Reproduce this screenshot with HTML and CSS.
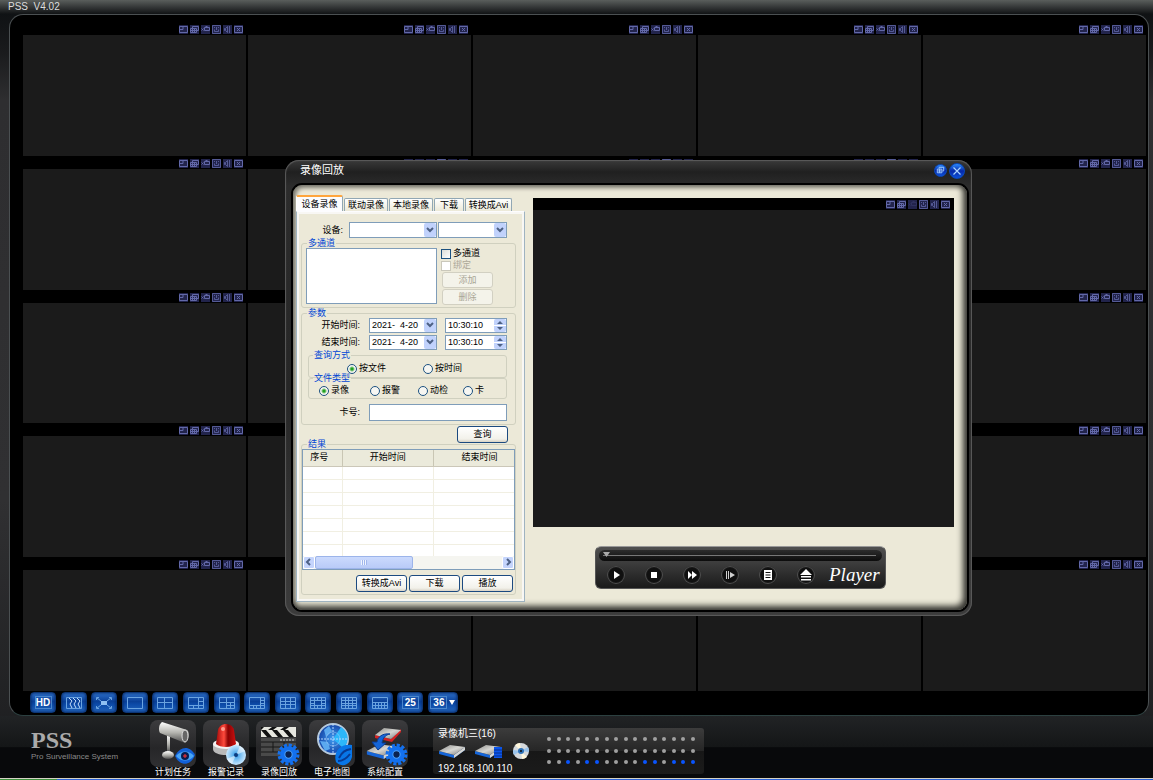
FILE: index.html
```html
<!DOCTYPE html>
<html lang="zh-CN">
<head>
  <meta charset="UTF-8" />
  <meta name="viewport" content="width=device-width, initial-scale=1.0"/>
  <title>PSS V4.02</title>
  <link rel="stylesheet" href="styles.css">
</head>
<body>

  <!-- shared symbols and gradients -->
  <svg class="defs" width="0" height="0" aria-hidden="true">
    <defs>
      <linearGradient id="metal" x1="0" y1="0" x2="0" y2="1">
        <stop offset="0" stop-color="#ffffff"/>
        <stop offset="0.5" stop-color="#b5b5b0"/>
        <stop offset="1" stop-color="#4b4b4b"/>
      </linearGradient>
      <linearGradient id="red" x1="0" y1="0" x2="1" y2="0">
        <stop offset="0" stop-color="#a00808"/>
        <stop offset="0.4" stop-color="#ff4a3c"/>
        <stop offset="0.6" stop-color="#8a0303"/>
        <stop offset="1" stop-color="#d01010"/>
      </linearGradient>
      <linearGradient id="plate" x1="0" y1="0" x2="1" y2="1">
        <stop offset="0" stop-color="#8b8b88"/>
        <stop offset="0.5" stop-color="#d6d6d2"/>
        <stop offset="1" stop-color="#777777"/>
      </linearGradient>
      <radialGradient id="disc">
        <stop offset="0" stop-color="#1b78c8"/>
        <stop offset="0.3" stop-color="#5fb2ee"/>
        <stop offset="1" stop-color="#c9e8ff"/>
      </radialGradient>
      <radialGradient id="radar">
        <stop offset="0" stop-color="#3f9bf0"/>
        <stop offset="1" stop-color="#1646a8"/>
      </radialGradient>
    </defs>
    <symbol id="i-view" viewBox="0 0 9 9"><path d="M.5 1.5h8v6h-8zM.5 4.500h3.500v-3"/></symbol>
    <symbol id="i-grid" viewBox="0 0 9 9"><path d="M.5 3.500h6v4h-6zM2.500 3.500v4M4.500 3.500v4M.5 5.500h6M2.500 3V1.500h6v4h-2"/></symbol>
    <symbol id="i-rec" viewBox="0 0 9 9"><path d="M3.500 2.500h5v3h-5zM.5 3.500l2 2M2.500 3.500l-2 2M4.500 1.500h2"/></symbol>
    <symbol id="i-snap" viewBox="0 0 9 9"><path d="M.5 .5h8v8h-8zM2.500 2v1M6.500 2v1M4.500 2v3M2.500 4.500v2h4v-2" opacity="0.8"/></symbol>
    <symbol id="i-sound" viewBox="0 0 9 9"><path d="M1.500 3.500v2h1v-2zM3 3l1.500-1.500v6L3 6M6.500 1v7" opacity="0.8"/></symbol>
    <symbol id="i-close" viewBox="0 0 9 9"><path d="M.5 1.500h8v6h-8zM3 3l3 3M6 3l-3 3"/></symbol>
    <symbol id="i-gear" viewBox="0 0 22 22">
      <circle cx="11" cy="11" r="9" fill="none" stroke="#1370ee" stroke-width="3" stroke-dasharray="3 1.700"/>
      <circle cx="11" cy="11" r="5.500" fill="none" stroke="#1370ee" stroke-width="5"/>
      <circle cx="11" cy="11" r="3.500" fill="#0a2250" stroke="#4aa2ff"/>
    </symbol>
    <symbol id="i-disk" viewBox="0 0 28 16">
      <path d="M1 8v3l15 4 11-8V4L16 12z" fill="#1565d8"/>
      <path d="M16 12l11-8v3l-11 8z" fill="#d6d6d2"/>
      <path d="M1 8l11-6 15 2-11 8z" fill="url(#plate)"/>
    </symbol>
  </svg>

  <header class="titlebar"><h1>PSS&nbsp; V4.02</h1></header>

  <main class="monitor">
    <div class="tiles" id="tiles"></div>

    <nav class="layouts" aria-label="画面分割">
      <button class="layout-btn"><span class="boxed">HD</span></button>
      <button class="layout-btn" aria-label="流畅"><svg viewBox="0 0 18 14"><path d="M1.500 1.500h15v11h-15z"/><path class="bright" d="M4 2l3 3-2 3 2 4M8 2l3 3-2 3 2 4M12 2l3 3-2 3 2 4"/></svg></button>
      <button class="layout-btn" aria-label="全屏"><svg viewBox="0 0 18 14"><path d="M1.500 4V1.500H4M14 1.500h2.500V4M16.500 10v2.500H14M4 12.500H1.500V10M2 2l4 3M16 2l-4 3M2 12l4-3M16 12l-4-3"/><path class="solid" d="M6 5h6v4H6z"/></svg></button>
      <button class="layout-btn" aria-label="1"><svg viewBox="0 0 18 14"><path d="M1.500 1.500h15v11h-15z"/></svg></button>
      <button class="layout-btn" aria-label="4"><svg viewBox="0 0 18 14"><path d="M1.500 1.500h15v11h-15zM8.500 2v10M2 6.500h14"/></svg></button>
      <button class="layout-btn" aria-label="6"><svg viewBox="0 0 18 14"><path d="M1.500 1.500h15v11h-15zM11.500 2v10M12 5.500h4M2 9.500h14M6.500 10v2"/></svg></button>
      <button class="layout-btn" aria-label="7"><svg viewBox="0 0 18 14"><path d="M1.500 1.500h15v11h-15zM8.500 2v10M2 6.500h14M12.500 7v5M9 9.500h7"/></svg></button>
      <button class="layout-btn" aria-label="8"><svg viewBox="0 0 18 14"><path d="M1.500 1.500h15v11h-15zM12.500 2v10M2 9.500h14M5.500 10v2M8.500 10v2M13 4.500h3M13 7.500h3"/></svg></button>
      <button class="layout-btn" aria-label="9"><svg viewBox="0 0 18 14"><path d="M1.500 1.500h15v11h-15zM6.500 2v10M11.500 2v10M2 5.500h14M2 8.500h14"/></svg></button>
      <button class="layout-btn" aria-label="13"><svg viewBox="0 0 18 14"><path d="M1.500 1.500h15v11h-15zM5.500 2v10M12.500 2v10M2 4.500h14M2 9.500h14M8.500 2v2M8.500 10v2M2 7.500h3M13 7.500h3"/></svg></button>
      <button class="layout-btn" aria-label="16"><svg viewBox="0 0 18 14"><path d="M1.500 1.500h15v11h-15zM5.500 2v10M8.500 2v10M12.500 2v10M2 4.500h14M2 7.500h14M2 9.500h14"/></svg></button>
      <button class="layout-btn" aria-label="20"><svg viewBox="0 0 18 14"><path d="M1.500 1.500h15v11h-15zM2 6.500h14M2 9.500h14M4.500 7v5M7.500 7v5M10.500 7v5M13.500 7v5"/></svg></button>
      <button class="layout-btn"><span class="boxed">25</span></button>
      <button class="layout-btn wide"><span class="boxed">36</span><i class="down"></i></button>
    </nav>
  </main>

  <footer class="dock">
    <div class="logo">
      <strong>PSS</strong>
      <small>Pro Surveillance System</small>
    </div>

    <nav class="apps">
      <a class="app" href="#">
        <svg viewBox="0 0 46 47">
          <path d="M17 15h3v18h-3z" fill="url(#metal)"/>
          <ellipse cx="18" cy="35" rx="6" ry="4" fill="url(#metal)"/>
          <path d="M12 2l25 8c3 2 2 11-2 13L10 13c-2-3-1-9 2-11z" fill="url(#metal)"/>
          <ellipse cx="35" cy="16" rx="3" ry="6" fill="#666" stroke="#ddd"/>
          <path d="M25 36c5-10 15-11 20-1-4 11-15 12-20 1z" fill="#1160d8"/>
          <path d="M26 36c5-6 13-6 18 0-5 6-13 6-18 0z" fill="#49a5f5"/>
          <circle cx="35" cy="36" r="4" fill="#0a1c50"/><path d="M33 36h4M35 34v4" stroke="#f33"/>
        </svg>
        <span>计划任务</span>
      </a>
      <a class="app" href="#">
        <svg viewBox="0 0 46 47">
          <path d="M10 24v5c0 8 26 8 26 0v-5z" fill="#b9b9b9"/>
          <ellipse cx="23" cy="24" rx="13" ry="5" fill="#f2f2f2"/>
          <path d="M13 24L15 10c2-8 14-8 16 0l2 14c-4 4-16 4-20 0z" fill="url(#red)"/>
          <circle cx="20" cy="9" r="2" fill="#ff9b8e"/>
          <circle cx="33" cy="35" r="10" fill="url(#disc)"/>
          <path d="M33 35l-9 4a10 10 0 0 0 5 5zM33 35l9-4a10 10 0 0 0-5-5z" fill="#fff" opacity="0.5"/>
          <circle cx="33" cy="35" r="2" fill="#0b3c80"/>
        </svg>
        <span>报警记录</span>
      </a>
      <a class="app" href="#">
        <svg viewBox="0 0 46 47">
          <path d="M5 18h35v18H5z" fill="#4a4a4a"/>
          <path d="M5 22h35M5 27h35M5 32h35M17 22v10M28 22v10" stroke="#161616"/>
          <path d="M5 7h35v10H5z" fill="#e6e6df"/>
          <path d="M5 10l6 7h5l-6-7zM16 10l6 7h5l-6-7zM27 10l6 7h5l-6-7zM5 7h3l-3 3zM12 10l4-3h5l-4 3zM24 10l4-3h5l-4 3z" fill="#111"/>
          <path d="M24 20h14" stroke="#ccc" stroke-dasharray="2 1"/>
          <use href="#i-gear" x="21" y="23" width="23" height="23"/>
        </svg>
        <span>录像回放</span>
      </a>
      <a class="app" href="#">
        <svg viewBox="0 0 46 47">
          <circle cx="24" cy="19" r="15" fill="url(#radar)" stroke="#b5c9dd" stroke-width="2"/>
          <path d="M24 19l8-12c9 6 8 16 2 21z" fill="#2cb7fa"/>
          <path d="M15 10l5-4 3 5-6 6zM11 21l8 1 2 7-5 2z" fill="#5ba9ef"/>
          <path d="M9 19h30M24 4v30" stroke="#b7d9ff" stroke-dasharray="2 1"/>
          <circle cx="24" cy="19" r="7" fill="none" stroke="#a6cdfa" opacity="0.5"/>
          <path d="M27 42c-3-10 4-19 16-17v12c-2 8-10 11-16 5z" fill="#0876e8"/>
          <path d="M30 38c3-6 6-8 12-9M29 41c5 0 9-3 12-7" fill="none" stroke="#073a94" stroke-width="2"/>
        </svg>
        <span>电子地图</span>
      </a>
      <a class="app" href="#">
        <svg viewBox="0 0 46 47">
          <path d="M13 15v3l17 4 9-10V9L29 19z" fill="#d32222"/>
          <path d="M13 15l9-7 17 2-10 9z" fill="url(#plate)"/>
          <use href="#i-disk" x="3" y="22" width="33" height="18"/>
          <path d="M28 14c-8-1-12 3-13 8h-5l6 8 8-7h-4c1-5 3-8 8-9z" fill="#1565d8" stroke="#0a3b90"/>
          <use href="#i-gear" x="23" y="23" width="23" height="23"/>
        </svg>
        <span>系统配置</span>
      </a>
    </nav>

    <section class="device">
      <div class="device-info">
        <span>录像机三(16)</span>
        <div class="device-icons">
          <svg viewBox="0 0 28 16"><use href="#i-disk"/></svg>
          <svg class="db" viewBox="0 0 30 16"><use href="#i-disk" x="0" width="28" height="16"/><path d="M20 4h8v11h-8z" fill="#0a55ec"/><path d="M20 7h8M20 10h8M20 13h8" stroke="#06308c"/></svg>
          <svg class="cd" viewBox="0 0 18 18"><circle cx="9" cy="9" r="8" fill="#d5d9dc"/><path d="M9 9L3 3a8 8 0 0 1 5-2zM9 9l6 6a8 8 0 0 1-5 2z" fill="#fff7dc"/><path d="M9 9l7-4a8 8 0 0 1 1 5zM9 9l-7 4a8 8 0 0 1-1-5z" fill="#9cc5ec"/><circle cx="9" cy="9" r="3" fill="#2e72b8"/><circle cx="9" cy="9" r="1" fill="#111"/></svg>
        </div>
        <span>192.168.100.110</span>
      </div>
      <div class="leds" id="leds"></div>
    </section>
  </footer>
  <div class="taskbar"></div>

  <section class="dialog" role="dialog" aria-labelledby="dlgTitle">
    <header class="dialog-head">
      <h2 id="dlgTitle">录像回放</h2>
      <button class="orb small" aria-label="还原"><svg viewBox="0 0 12 12"><path d="M2.500 4.500h5v4h-5zM4.500 4V2.500h5v4H8M5 4.500v4M3 6.500h4"/></svg></button>
      <button class="orb" aria-label="关闭"><svg viewBox="0 0 12 12"><path d="M3 3l6 6M9 3l-6 6"/></svg></button>
    </header>

    <div class="dialog-body">
      <div class="side">
        <div class="tabs" role="tablist">
          <button class="tab active" role="tab" aria-selected="true">设备录像</button>
          <button class="tab" role="tab">联动录像</button>
          <button class="tab" role="tab">本地录像</button>
          <button class="tab short" role="tab">下载</button>
          <button class="tab" role="tab">转换成Avi</button>
        </div>

        <form class="panel">
          <div class="row device-row">
            <label for="device">设备:</label>
            <select id="device" class="field w-device"><option></option></select>
            <select class="field w-channel" aria-label="通道"><option></option></select>
          </div>

          <fieldset class="channels">
            <legend>多通道</legend>
            <div class="multi">
              <textarea class="channel-list" aria-label="通道列表"></textarea>
              <div class="multi-side">
                <label class="check"><input type="checkbox">多通道</label>
                <label class="check off"><input type="checkbox" disabled>绑定</label>
                <button type="button" class="btn" disabled>添加</button>
                <button type="button" class="btn" disabled>删除</button>
              </div>
            </div>
          </fieldset>

          <fieldset>
            <legend>参数</legend>
            <div class="row time-row">
              <label for="startDate">开始时间:</label>
              <span class="combo w-date"><input id="startDate" type="text" value="2021-  4-20"><button type="button" class="drop" aria-label="选择日期"></button></span>
              <span class="combo w-time"><input type="text" value="10:30:10" aria-label="开始时刻"><button type="button" class="spin" aria-label="调整"></button></span>
            </div>
            <div class="row time-row">
              <label for="endDate">结束时间:</label>
              <span class="combo w-date"><input id="endDate" type="text" value="2021-  4-20"><button type="button" class="drop" aria-label="选择日期"></button></span>
              <span class="combo w-time"><input type="text" value="10:30:10" aria-label="结束时刻"><button type="button" class="spin" aria-label="调整"></button></span>
            </div>

            <fieldset class="sub">
              <legend>查询方式</legend>
              <div class="radios mode">
                <label><input type="radio" name="mode" checked>按文件</label>
                <label><input type="radio" name="mode">按时间</label>
              </div>
            </fieldset>
            <fieldset class="sub joined">
              <legend>文件类型</legend>
              <div class="radios type">
                <label><input type="radio" name="type" checked>录像</label>
                <label><input type="radio" name="type">报警</label>
                <label><input type="radio" name="type">动检</label>
                <label><input type="radio" name="type">卡</label>
              </div>
            </fieldset>

            <div class="row card-row">
              <label for="card">卡号:</label>
              <input id="card" class="field" type="text">
            </div>
          </fieldset>

          <div class="query"><button type="button" class="btn">查询</button></div>

          <fieldset class="result">
            <legend>结果</legend>
            <div class="list">
              <table>
                <thead><tr><th class="no">序号</th><th>开始时间</th><th>结束时间</th></tr></thead>
                <tbody>
                  <tr><td></td><td></td><td></td></tr>
                  <tr><td></td><td></td><td></td></tr>
                  <tr><td></td><td></td><td></td></tr>
                  <tr><td></td><td></td><td></td></tr>
                  <tr><td></td><td></td><td></td></tr>
                  <tr><td></td><td></td><td></td></tr>
                  <tr><td></td><td></td><td></td></tr>
                </tbody>
              </table>
              <div class="scrollbar">
                <button type="button" aria-label="向左"><svg viewBox="0 0 10 10"><path d="M6 2L3 5l3 3"/></svg></button>
                <span class="thumb"><i></i></span>
                <button type="button" aria-label="向右"><svg viewBox="0 0 10 10"><path d="M4 2l3 3-3 3"/></svg></button>
              </div>
            </div>
            <div class="actions">
              <button type="button" class="btn">转换成Avi</button>
              <button type="button" class="btn">下载</button>
              <button type="button" class="btn">播放</button>
            </div>
          </fieldset>
        </form>
      </div>

      <div class="stage">
        <div class="video">
          <div class="tile-head" id="videoHead"></div>
        </div>
        <div class="player">
          <input class="seek" type="range" min="0" max="100" value="0" aria-label="进度">
          <div class="controls">
            <button aria-label="播放"><svg viewBox="0 0 18 18"><path d="M7 5v8l6-4z"/></svg></button>
            <button aria-label="停止"><svg viewBox="0 0 18 18"><path d="M6 6h6v6H6z"/></svg></button>
            <button aria-label="快进"><svg viewBox="0 0 18 18"><path d="M5 5v8l4-4zM9 5v8l5-4z"/></svg></button>
            <button aria-label="慢放"><svg viewBox="0 0 18 18"><path d="M5 5h1v8H5zM7 5h1v8H7zM9 6v6l5-3z" opacity="0.8"/></svg></button>
            <button aria-label="列表"><svg viewBox="0 0 18 18"><path d="M5 4h8v10H5zM6.500 6v1h5V6zM6.500 8.500v1h5v-1zM6.500 11v1h5v-1z" fill-rule="evenodd"/></svg></button>
            <button aria-label="打开"><svg viewBox="0 0 18 18"><path d="M9 3l6 6H3zM4 10h10v1.500H4zM4 13h10v1.500H4z"/></svg></button>
            <em>Player</em>
          </div>
        </div>
      </div>
    </div>
  </section>

  <script src="script.js"></script>
</body>
</html>
```

FILE: styles.css
```css
* {
  box-sizing: border-box;
}

body {
  margin: 0;
  height: 100vh;
  display: flex;
  flex-direction: column;
  position: relative;
  overflow: hidden;
  background: linear-gradient(#0c0f11, #191a1c 50px, #2e2e30 100px, #303032 500px, #1b1c1e 100%);
  color: #fff;
  font-family: "Liberation Sans", "Noto Sans CJK SC", sans-serif;
  font-size: 9px;
  line-height: 11px;
}

button,
input,
select,
textarea {
  margin: 0;
  padding: 0;
  border: 0;
  border-radius: 0;
  color: inherit;
  font: inherit;
}

.defs {
  position: absolute;
}

/* main window */
.titlebar {
  height: 14px;
  padding-left: 8px;
  background: linear-gradient(#5a5e5c, #101214);
}

.titlebar h1 {
  margin: 0;
  font-size: 10px;
  font-weight: normal;
  line-height: 14px;
  color: #ddd;
}

.monitor {
  flex: 1;
  display: flex;
  flex-direction: column;
  margin: 0 4px 0 9px;
  padding: 7px 2px 2px 13px;
  background: #000;
  border: 1px solid #4b5052;
  border-bottom-color: #2c4040;
  border-radius: 14px;
}

.tiles {
  flex: 1;
  display: grid;
  grid-template-columns: repeat(5, 1fr);
  grid-template-rows: repeat(5, 1fr);
  column-gap: 2px;
}

.tile {
  display: flex;
  flex-direction: column;
}

.tile-head {
  display: flex;
  justify-content: flex-end;
  align-items: flex-end;
  gap: 2px;
  height: 13px;
  padding: 0 3px 1px 0;
}

.tile-head button {
  display: flex;
  width: 9px;
  height: 9px;
  background: #22244c;
}

.tile-head svg {
  width: 9px;
  height: 9px;
  fill: none;
  stroke: #6268a8;
}

.tile-screen {
  flex: 1;
  background: #1b1b1b;
}

.layouts {
  display: flex;
  justify-content: space-between;
  max-width: 428px;
  margin: 1px 0 0 7px;
}

.layout-btn {
  display: flex;
  align-items: center;
  justify-content: center;
  width: 26px;
  height: 21px;
  border: 1px solid #0c3575;
  border-radius: 4px;
  background: linear-gradient(#2c6fc8, #0a4098 45%, #0c4aa8 60%, #2265bc);
  box-shadow: inset 0 0 3px #051f58;
}

.layout-btn.wide {
  width: 30px;
  gap: 2px;
}

.layout-btn svg {
  width: 18px;
  height: 14px;
  fill: none;
  stroke: #6aa3e0;
}

.layout-btn .bright {
  stroke: #c4dcfa;
}

.layout-btn .solid {
  fill: #8fc0f2;
  stroke: none;
}

.boxed {
  border: 1px solid #4a86cc;
  font-size: 10px;
  font-weight: bold;
  line-height: 11px;
  width: 17px;
  text-align: center;
}

.down {
  border: 3px solid transparent;
  border-top: 5px solid #fff;
  border-bottom: 0;
}

/* bottom dock */
.dock {
  display: flex;
  align-items: flex-start;
  height: 62px;
  background: linear-gradient(#212325, #141617 50%, #08090b 51%, #08090b);
}

.logo {
  width: 150px;
  padding: 12px 0 0 31px;
}

.logo strong {
  display: block;
  font: bold 24px/24px "Liberation Serif", serif;
  color: #aaa;
}

.logo small {
  display: block;
  font-size: 8px;
  line-height: 10px;
  color: #8a8a8a;
  white-space: nowrap;
}

.apps {
  display: flex;
  gap: 7px;
  padding-top: 4px;
}

.app {
  width: 46px;
  color: #fff;
  text-align: center;
  text-decoration: none;
}

.app svg {
  display: block;
  width: 46px;
  height: 47px;
  border-radius: 8px;
  background: linear-gradient(#3c3c3e, #262628 60%, #303032);
}

.device {
  display: flex;
  justify-content: space-between;
  width: 271px;
  height: 46px;
  margin: 12px 0 0 25px;
  padding: 0 9px 0 5px;
  border-radius: 3px;
  background: linear-gradient(#3c3c3c, #262626 50%, #171717 51%, #1b1b1b);
  font-size: 10px;
}

.device-info {
  display: flex;
  flex-direction: column;
  justify-content: space-between;
}

.device-info > span {
  line-height: 11px;
}

.device-icons {
  display: flex;
  align-items: center;
  gap: 8px;
}

.device-icons svg {
  width: 28px;
  height: 16px;
}

.device-icons .db {
  width: 30px;
}

.device-icons .cd {
  width: 18px;
  height: 18px;
}

.leds {
  display: grid;
  grid-template-columns: repeat(16, 4px);
  justify-content: space-between;
  align-content: space-between;
  width: 148px;
  height: 27px;
  margin-top: 9px;
}

.led {
  width: 4px;
  height: 4px;
  border-radius: 50%;
  background: #a0a0a0;
}

.led.on {
  background: #0a55ff;
}

.taskbar {
  height: 2px;
  border-top: 1px solid #d5d3c4;
  background: linear-gradient(90deg, #3c8f3c 57px, #2a62d8 57px);
}

/* playback dialog */
.dialog {
  position: absolute;
  left: 285px;
  top: 160px;
  width: 687px;
  padding: 0 3px 4px 6px;
  border-radius: 14px;
  background: linear-gradient(#3a3a3a, #202020 12px, #2c2c2c 26px, #262626 50%, #3c3c3c);
  box-shadow: inset 0 0 1px 1px #5c5c5c;
  color: #000;
}

.dialog-head {
  display: flex;
  align-items: center;
  gap: 2px;
  height: 23px;
  padding: 0 4px 2px 9px;
}

.dialog-head h2 {
  flex: 1;
  margin: 0;
  font-size: 11px;
  font-weight: normal;
  color: #fff;
}

.orb {
  display: flex;
  width: 16px;
  height: 16px;
  border: 1px solid #0b48b8;
  border-radius: 50%;
  background: linear-gradient(#2c8cff, #0628a8 50%, #0d50d8);
}

.orb.small {
  width: 13px;
  height: 13px;
}

.orb svg {
  width: 100%;
  height: 100%;
  fill: none;
  stroke: #a9d3ff;
}

.dialog-body {
  display: flex;
  padding: 10px 13px 8px 3px;
  border: 2px solid #000;
  border-radius: 11px;
  background: #ece9d8;
  box-shadow: inset -3px -3px 6px 1px #33332f, inset 2px 2px 4px 1px #8d8b80;
}

.side {
  width: 229px;
}

.tabs {
  display: flex;
  align-items: flex-end;
  gap: 1px;
  height: 16px;
}

.tab {
  height: 13px;
  width: 44px;
  border: 1px solid #91a7b4;
  border-bottom: 0;
  border-radius: 2px 2px 0 0;
  background: linear-gradient(#fff, #ece9d8);
  white-space: nowrap;
}

.tab:last-child {
  width: 47px;
}

.tab.short {
  width: 30px;
}

.tab.active {
  width: 47px;
  height: 16px;
  border-top: 2px solid #ffa53c;
  border-left-color: #fff;
  background: #fcfcfe;
}

.panel {
  padding: 8px 2px 6px;
  border: 1px solid #9fb3c0;
  border-top-color: #fcfcfe;
  background: #ece9d8;
  box-shadow: inset 0 0 0 2px #f8f7f4;
}

.row {
  display: flex;
  align-items: center;
}

.row label {
  text-align: right;
}

.device-row {
  gap: 1px;
  margin-top: 2px;
}

.device-row label {
  width: 44px;
  margin-right: 5px;
}

.field,
.combo,
.channel-list {
  height: 16px;
  border: 1px solid #7f9db9;
  background: #fff;
}

select.field {
  appearance: none;
  background: #fff url("data:image/svg+xml,%3Csvg xmlns='http://www.w3.org/2000/svg' width='12' height='14'%3E%3Crect width='12' height='14' rx='2' fill='%23c1d2fc'/%3E%3Cpath d='M3 5l3 3 3-3' fill='none' stroke='%234d6185' stroke-width='2'/%3E%3C/svg%3E") no-repeat right center;
}

.w-device {
  width: 88px;
}

.w-channel {
  width: 69px;
}

fieldset {
  min-width: 0;
  margin: 0 6px 0 2px;
  padding: 0 2px 3px 4px;
  border: 1px solid #d0d0bf;
  border-radius: 3px;
}

legend {
  margin-left: 1px;
  padding: 0 1px;
  color: #0046d5;
  line-height: 10px;
}

.channels {
  padding-bottom: 2px;
}

.multi {
  display: flex;
  gap: 4px;
}

.channel-list {
  width: 131px;
  height: 56px;
  resize: none;
}

.multi-side {
  display: flex;
  flex-direction: column;
  gap: 1px;
}

.check {
  display: flex;
  align-items: center;
  gap: 2px;
  height: 11px;
}

.off {
  color: #aca899;
}

input[type="checkbox"] {
  appearance: none;
  width: 10px;
  height: 10px;
  border: 1px solid #1c5180;
  background: linear-gradient(135deg, #dcdcd7, #fff);
}

input[type="checkbox"]:disabled {
  border-color: #cac8bb;
  background: #fff;
}

.btn {
  width: 51px;
  height: 17px;
  border: 1px solid #1c4a80;
  border-radius: 3px;
  background: linear-gradient(#fff, #f2f1ea 80%, #d8d2c5);
  white-space: nowrap;
}

.btn:disabled {
  height: 16px;
  margin-left: 1px;
  border-color: #d2d0c2;
  background: #f4f3ea;
  color: #a9a695;
}

.time-row {
  height: 15px;
  margin-bottom: 2px;
}

.time-row label {
  width: 54px;
  margin-right: 9px;
}

.combo {
  display: flex;
  height: 15px;
  padding-left: 2px;
}

.combo input {
  flex: 1;
  min-width: 0;
  background: none;
  white-space: pre;
}

.w-date {
  width: 68px;
  margin-right: 8px;
}

.w-time {
  width: 62px;
}

.drop,
.spin {
  width: 12px;
  border-radius: 2px;
  background: #c1d2fc url("data:image/svg+xml,%3Csvg xmlns='http://www.w3.org/2000/svg' width='12' height='13'%3E%3Cpath d='M3 4l3 3 3-3' fill='none' stroke='%234d6185' stroke-width='2'/%3E%3C/svg%3E") no-repeat center;
}

.spin {
  background-image: url("data:image/svg+xml,%3Csvg xmlns='http://www.w3.org/2000/svg' width='12' height='13'%3E%3Cpath d='M3 5l3-3 3 3zM3 8h6l-3 3z' fill='%234d6185'/%3E%3Cpath d='M0 6.500h12' stroke='%23fff'/%3E%3C/svg%3E");
}

.sub {
  margin: -2px 6px 0 2px;
  padding: 0;
}

.sub legend {
  margin-left: 4px;
}

.sub.joined {
  margin-top: -5px;
}

.radios {
  display: flex;
  align-items: center;
  height: 17px;
}

.radios label {
  display: flex;
  align-items: center;
  gap: 2px;
}

.mode label {
  width: 76px;
}

.mode {
  padding-left: 38px;
}

.type {
  display: grid;
  grid-template-columns: 51px 48px 45px auto;
  height: 15px;
  padding-left: 10px;
}

input[type="radio"] {
  appearance: none;
  width: 10px;
  height: 10px;
  border: 1px solid #1c5180;
  border-radius: 50%;
  background: #f6f6f2;
}

input[type="radio"]:checked {
  background: radial-gradient(circle, #21a121 1px, #f6f6f2 3px);
}

.card-row {
  margin-top: 5px;
}

.card-row label {
  width: 54px;
  margin-right: 9px;
}

.card-row .field {
  width: 138px;
  height: 17px;
}

.query {
  display: flex;
  justify-content: flex-end;
  margin: 1px 14px 0 0;
}

.result {
  margin-top: -4px;
  padding: 0 0 2px;
}

.result legend {
  margin-left: 5px;
}

.list {
  height: 121px;
  overflow: hidden;
  border: 1px solid #7f9db9;
  background: #fff;
}

table {
  width: 223px;
  table-layout: fixed;
  border-collapse: collapse;
}

th {
  height: 16px;
  padding: 0;
  border-right: 1px solid #c9c6b4;
  border-bottom: 1px solid #cbc7b8;
  background: #ebeadb;
  font-weight: normal;
}

th.no {
  width: 39px;
  padding-right: 6px;
}

td {
  height: 13px;
  padding: 0;
  border-right: 1px solid #f1efe2;
  border-bottom: 1px solid #f1efe2;
}

tbody tr:last-child td {
  height: 12px;
  border-bottom: 0;
}

.scrollbar {
  display: flex;
  height: 13px;
  background: #f5f5f0;
}

.scrollbar button {
  display: flex;
  width: 12px;
  border: 1px solid #fff;
  border-radius: 2px;
  background: #c4d4fc;
}

.scrollbar button:last-child {
  margin-left: auto;
}

.scrollbar svg {
  width: 10px;
  height: 10px;
  fill: none;
  stroke: #4d6185;
  stroke-width: 2;
}

.thumb {
  display: flex;
  align-items: center;
  justify-content: center;
  width: 98px;
  border: 1px solid #9cb4ea;
  border-radius: 2px;
  background: linear-gradient(#cbdafd, #b9cbf8);
}

.thumb i {
  width: 6px;
  height: 5px;
  background: repeating-linear-gradient(90deg, #eef4fe 0 1px, #a0b6ec 1px 2px);
}

.actions {
  display: flex;
  justify-content: flex-end;
  gap: 2px;
  padding: 5px 2px 0 0;
}

/* video and player */
.stage {
  flex: 1;
  padding: 3px 0 0 8px;
}

.video {
  height: 329px;
  background: linear-gradient(#000 12px, #1b1b1b 12px);
}

.video .tile-head {
  height: 12px;
  padding-right: 4px;
}

.video button:nth-child(3) svg {
  opacity: 0.2;
}

.player {
  width: 291px;
  height: 43px;
  margin: 19px 0 0 62px;
  padding: 3px;
  border: 1px solid #555;
  border-top-color: #999;
  border-radius: 6px;
  background: linear-gradient(#505050, #3c3c3c 40%, #1a1a1a);
  color: #fff;
}

.seek {
  appearance: none;
  display: block;
  width: 100%;
  height: 11px;
  padding: 0 6px 0 4px;
  border-radius: 6px;
  background: linear-gradient(#2c2c2c, #0c0c0c);
}

.seek::-webkit-slider-runnable-track {
  height: 9px;
  background: linear-gradient(transparent 4px, #777 4px, #777 5px, transparent 5px);
}

.seek::-webkit-slider-thumb {
  appearance: none;
  width: 7px;
  height: 5px;
  margin-top: 1px;
  background: #aaa;
  clip-path: polygon(0 0, 100% 0, 50% 100%);
}

.controls {
  display: flex;
  align-items: center;
  gap: 20px;
  padding: 5px 0 0 8px;
}

.controls button {
  display: flex;
  flex: none;
  width: 18px;
  height: 18px;
  border-radius: 50%;
  background: #101010;
  box-shadow: inset 0 0 1px 1px #555;
}

.controls svg {
  width: 18px;
  height: 18px;
  fill: #fff;
}

.controls em {
  margin-left: -6px;
  font: italic 19px/18px "Liberation Serif", serif;
}
```

FILE: script.js
```js
const ICONS = [
  ["view", "画面"],
  ["grid", "多画面"],
  ["rec", "录像"],
  ["snap", "抓图"],
  ["sound", "声音"],
  ["close", "关闭"]
];

const LIT = [2, 4, 5, 10, 11, 13, 14, 15];

const headHtml = ICONS.map(([id, label]) =>
  `<button aria-label="${label}"><svg><use href="#i-${id}"/></svg></button>`
).join("");

const tiles = document.getElementById("tiles");
for (let i = 0; i < 25; i++) {
  const tile = document.createElement("div");
  tile.className = "tile";
  tile.innerHTML = `<div class="tile-head">${headHtml}</div><div class="tile-screen"></div>`;
  tiles.appendChild(tile);
}

document.getElementById("videoHead").innerHTML = headHtml;

// three rows of 16 channel lights, only the last row has active ones
const leds = document.getElementById("leds");
for (let i = 0; i < 48; i++) {
  const led = document.createElement("span");
  led.className = i >= 32 && LIT.includes(i - 32) ? "led on" : "led";
  leds.appendChild(led);
}
```
